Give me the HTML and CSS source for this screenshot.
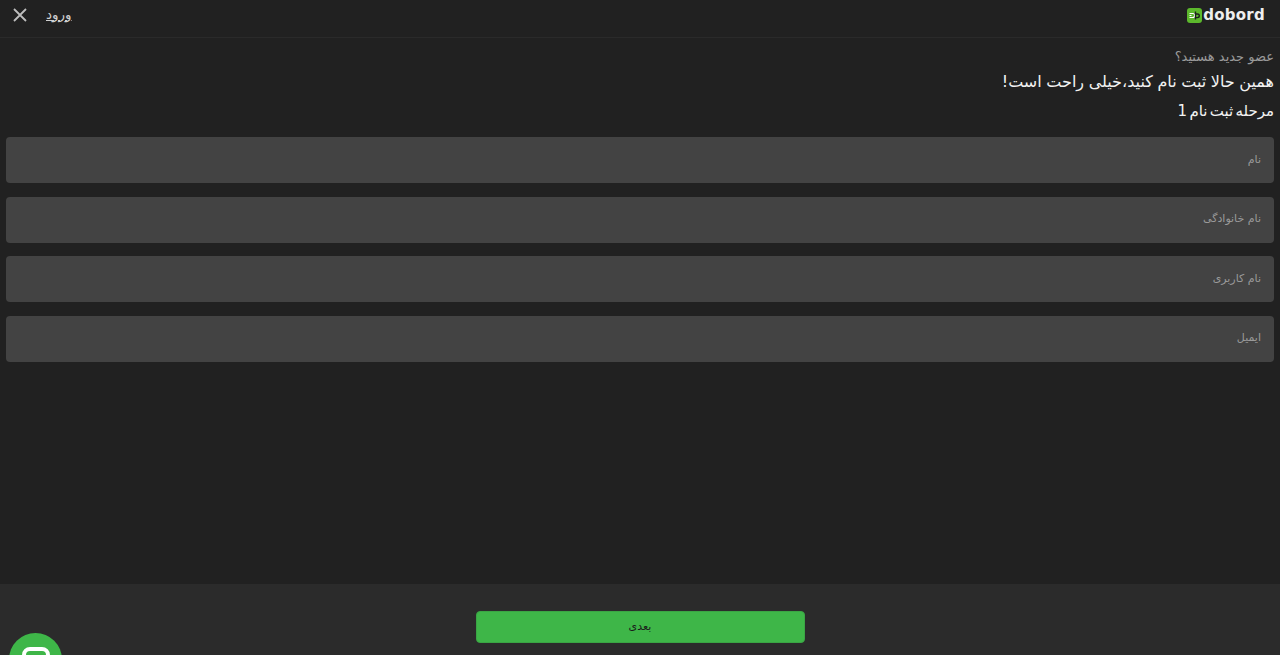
FILE: index.html
```html
<!DOCTYPE html>
<html lang="fa">
<head>
  <meta charset="utf-8">
  <title>Dobord</title>
  <link rel="stylesheet" href="styles.css">
</head>
<body>
  <header class="topbar">
    <div class="topbar-left">
      <button class="close-btn" type="button" aria-label="بستن">
        <svg width="16" height="16" viewBox="0 0 16 16">
          <path d="M2 2l12 12M14 2L2 14" stroke="#bdbdbd" stroke-width="1.8" fill="none"/>
        </svg>
      </button>
      <a class="login-link" href="#">ورود</a>
    </div>
    <div class="brand">
      <svg class="brand-icon" width="15" height="15" viewBox="0 0 15 15">
        <rect width="15" height="15" rx="3" fill="#5cb82c"/>
        <path d="M2.5 5.5h3.2M2.5 9.5h3.2M5.7 5.5a2 2 0 0 1 0 4M2.5 7.5h2" fill="none" stroke="#fff" stroke-width="1.2"/>
        <path d="M8.5 3.5v8M8.5 6h2a1.8 1.8 0 0 1 0 3.6h-2" fill="none" stroke="#1f1f1f" stroke-width="1.4"/>
      </svg>
      <span class="brand-name" dir="ltr">dobord</span>
    </div>
  </header>

  <main class="content">
    <p class="eyebrow">عضو جدید هستید؟</p>
    <h1 class="title">همین حالا ثبت نام کنید،خیلی راحت است!</h1>
    <h2 class="step">مرحله ثبت نام 1</h2>
    <form class="signup-form">
      <input class="field" type="text" placeholder="نام">
      <input class="field" type="text" placeholder="نام خانوادگی">
      <input class="field" type="text" placeholder="نام کاربری">
      <input class="field" type="email" placeholder="ایمیل">
    </form>
  </main>

  <footer class="bottombar">
    <button class="next-btn" type="button">بعدی</button>
  </footer>

  <a class="chat-btn" href="#" aria-label="چت">
    <svg width="28" height="28" viewBox="0 0 28 28">
      <rect x="2" y="2" width="24" height="22" rx="6" fill="none" stroke="#fff" stroke-width="4"/>
    </svg>
  </a>
</body>
</html>
```

FILE: styles.css
```css
* {
  box-sizing: border-box;
}

html, body {
  height: 100%;
  overflow: hidden;
}

body {
  margin: 0;
  display: flex;
  flex-direction: column;
  background-color: #212121;
  color: #fff;
  font-family: "DejaVu Sans", sans-serif;
}

.topbar {
  height: 38px;
  flex-shrink: 0;
  display: flex;
  justify-content: space-between;
  align-items: flex-start;
  padding: 6px 15px 0 12px;
  border-bottom: 1px solid #2a2a2a;
  direction: ltr;
}

.brand {
  display: flex;
  align-items: center;
  gap: 1px;
  height: 18px;
}

.brand-name {
  font-size: 15px;
  font-weight: 700;
  letter-spacing: 0.25px;
  color: #eee;
}

.topbar-left {
  display: flex;
  align-items: center;
  gap: 18px;
  height: 17px;
}

.login-link {
  margin-top: -2px;
  font-size: 13.5px;
  color: #d0d0d0;
  text-decoration: underline;
}

.close-btn {
  padding: 0;
  border: none;
  background: none;
  display: flex;
  cursor: pointer;
}

.content {
  flex: 1;
  padding: 0 6px;
  direction: rtl;
}

.eyebrow {
  margin: 10px 0 0;
  font-size: 13px;
  line-height: 18px;
  color: #9a9a9a;
}

.title {
  margin: 4px 0 0;
  font-size: 16px;
  font-weight: 400;
  line-height: 24px;
  word-spacing: -0.5px;
  color: #f2f2f2;
}

.step {
  margin: 5px 0 0;
  font-size: 15px;
  font-weight: 400;
  line-height: 24px;
  word-spacing: -2.5px;
  color: #f2f2f2;
}

.signup-form {
  margin-top: 14px;
  display: flex;
  flex-direction: column;
  gap: 13.6px;
}

.field {
  width: 100%;
  height: 46px;
  padding: 0 13px 2px;
  border: none;
  border-radius: 4px;
  background-color: #434343;
  color: #fff;
  font-family: inherit;
  font-size: 11px;
  direction: rtl;
}

.field::placeholder {
  color: #9a9a9a;
  opacity: 1;
}

.bottombar {
  height: 71px;
  flex-shrink: 0;
  display: flex;
  justify-content: center;
  padding-top: 27px;
  background-color: #2b2b2b;
}

.next-btn {
  width: 329px;
  height: 32px;
  padding: 0 0 2px;
  border: 1px solid #3aa544;
  border-radius: 4px;
  background-color: #3eb648;
  color: #1a1a1a;
  font-family: inherit;
  font-size: 11px;
  cursor: pointer;
}

.chat-btn {
  position: absolute;
  left: 9px;
  top: 633px;
  width: 53px;
  height: 53px;
  border-radius: 50%;
  background-color: #3eb648;
  display: flex;
  justify-content: center;
  padding-top: 14px;
}
```
